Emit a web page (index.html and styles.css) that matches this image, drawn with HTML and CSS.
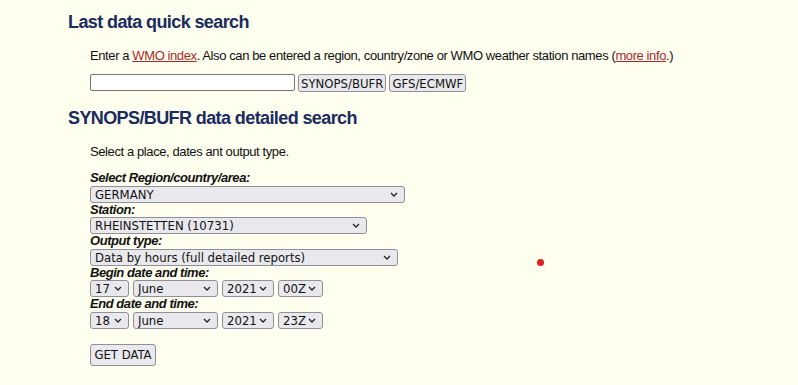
FILE: index.html
```html
<html lang="en">
<head>
    <meta charset="UTF-8">
    <title>Synop data search</title>
    <link rel="stylesheet" href="styles.css">
</head>
<body>
    <div class="page">
        <h2>Last data quick search</h2>
        <div class="block">
            <p class="intro">Enter a <a href="#">WMO index</a>. Also can be entered a region, country/zone or WMO weather station names (<a href="#">more info</a>.)</p>
            <form class="quick">
                <input type="text" class="ind">
                <button type="button">SYNOPS/BUFR</button>
                <button type="button">GFS/ECMWF</button>
            </form>
        </div>

        <h2 class="second">SYNOPS/BUFR data detailed search</h2>
        <div class="block">
            <p class="intro">Select a place, dates ant output type.</p>
            <form class="detail">
                <label>Select Region/country/area:</label>
                <select class="region"><option>GERMANY</option></select>
                <label>Station:</label>
                <select class="station"><option>RHEINSTETTEN (10731)</option></select>
                <label>Output type:</label>
                <select class="output"><option>Data by hours (full detailed reports)</option></select>
                <label>Begin date and time:</label>
                <div class="date-row">
                    <select class="day"><option>17</option></select>
                    <select class="month"><option>June</option></select>
                    <select class="year"><option>2021</option></select>
                    <select class="hour"><option>00Z</option></select>
                </div>
                <label>End date and time:</label>
                <div class="date-row">
                    <select class="day"><option>18</option></select>
                    <select class="month"><option>June</option></select>
                    <select class="year"><option>2021</option></select>
                    <select class="hour"><option>23Z</option></select>
                </div>
                <button type="button" class="get">GET DATA</button>
            </form>
        </div>
    </div>
    <div class="dot"></div>
</body>
</html>
```

FILE: styles.css
```css
* {
    box-sizing: border-box;
}
body {
    margin: 0;
    background-color: #fffff0;
    font-family: "Liberation Sans", Arial, sans-serif;
    font-size: 13px;
    letter-spacing: -0.4px;
    color: #111;
}
.page {
    padding: 12px 0 0 68px;
}
h2 {
    margin: 0;
    font-size: 18px;
    line-height: 20px;
    letter-spacing: -0.6px;
    color: #1a2b5e;
}
h2.second {
    margin-top: 16px;
}
.block {
    padding-left: 22px;
}
.intro {
    margin: 16px 0 10px 0;
    line-height: 16px;
}
a {
    color: #a52a2a;
}
.quick {
    display: flex;
    gap: 3px;
    margin: 0;
}
.ind {
    width: 205px;
    height: 17px;
    border: 1px solid #767676;
    border-radius: 2px;
    background: white;
}
button {
    font-family: "DejaVu Sans Condensed", "DejaVu Sans", sans-serif;
    font-size: 13px;
    letter-spacing: 0;
    height: 18px;
    padding: 0 2px;
    border: 1px solid #8f8f9d;
    border-radius: 3px;
    background-color: #e9e9ed;
    color: #111;
}
.detail {
    display: flex;
    flex-direction: column;
    align-items: flex-start;
    margin: 0;
    padding-top: 1px;
}
label {
    font-weight: bold;
    font-style: italic;
    letter-spacing: -0.45px;
    line-height: 14.5px;
}
select {
    appearance: none;
    font-family: "DejaVu Sans Condensed", "DejaVu Sans", sans-serif;
    font-size: 13px;
    letter-spacing: 0;
    height: 17px;
    padding: 0 16px 0 4px;
    border: 1px solid #8f8f9d;
    border-radius: 3px;
    background-color: #e9e9ed;
    background-image: url("data:image/svg+xml;utf8,<svg xmlns='http://www.w3.org/2000/svg' width='8' height='5' viewBox='0 0 8 5'><path d='M1 1 L4 4 L7 1' fill='none' stroke='%23222' stroke-width='1.3'/></svg>");
    background-repeat: no-repeat;
    background-position: right 6px center;
    color: #111;
}
.region { width: 315px; }
.station { width: 277px; }
.output { width: 308px; }
.date-row {
    display: flex;
    gap: 4px;
}
.day { width: 39px; }
.month { width: 85px; }
.year { width: 52px; }
.hour { width: 45px; }
.get {
    margin-top: 15px;
    height: 22px;
    width: 66px;
    padding: 0;
}
.dot {
    position: absolute;
    left: 537px;
    top: 259px;
    width: 7px;
    height: 7px;
    border-radius: 50%;
    background-color: #e02020;
}
```
